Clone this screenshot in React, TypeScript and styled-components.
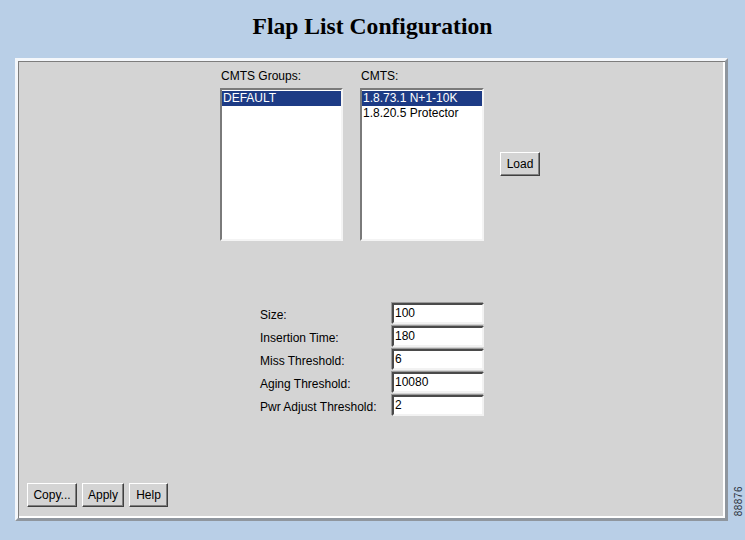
import React from 'react'
import styled, { createGlobalStyle } from 'styled-components'

const GlobalStyle = createGlobalStyle`
  html, body {
    margin: 0;
    padding: 0;
    background: #b9cfe7;
  }
  body {
    width: 745px;
    height: 540px;
    overflow: hidden;
    font-family: 'Liberation Sans', Arial, sans-serif;
  }
`

const Page = styled.div`
  position: relative;
  width: 745px;
  height: 540px;
  background: #b9cfe7;
`

const Title = styled.h1`
  margin: 0;
  height: 58px;
  line-height: 52px;
  text-align: center;
  font-family: 'Liberation Serif', 'Times New Roman', serif;
  font-size: 23.6px;
  font-weight: bold;
  color: #000;
`

const Panel = styled.div`
  box-sizing: border-box;
  margin-left: 15px;
  width: 713px;
  height: 463px;
  background: #d4d4d4;
  border: 3px solid;
  border-color: #f4f7fb #8f969e #8f969e #f4f7fb;
  box-shadow: inset 1px 1px 0 #7d7d7d, inset -2px -2px 0 #ffffff;
  padding: 8px 4px 8px 2px;
  display: flex;
  flex-direction: column;
`

const ListRow = styled.div`
  display: flex;
  align-items: flex-start;
  padding-left: 200px;
`

const ListColumn = styled.div<{ $gap?: number }>`
  display: flex;
  flex-direction: column;
  margin-right: ${({ $gap }) => $gap ?? 0}px;
`

const Caption = styled.div`
  font-size: 12px;
  line-height: 14px;
  height: 14px;
  color: #000;
  padding-left: 1px;
  margin-bottom: 5px;
`

const ListBox = styled.div<{ $width: number }>`
  box-sizing: border-box;
  width: ${({ $width }) => $width}px;
  height: 153px;
  background: #fff;
  border: 2px solid;
  border-color: #7a7a7a #f4f4f4 #f4f4f4 #7a7a7a;
  padding-top: 1px;
`

const ListItem = styled.div<{ $selected?: boolean }>`
  height: 15px;
  line-height: 15px;
  font-size: 12px;
  padding-left: 1px;
  white-space: nowrap;
  color: ${({ $selected }) => ($selected ? '#ffffff' : '#000000')};
  background: ${({ $selected }) => ($selected ? '#1d3b85' : 'transparent')};
`

const Button = styled.button<{ $width: number }>`
  box-sizing: border-box;
  width: ${({ $width }) => $width}px;
  height: 24px;
  padding: 0;
  background: #d4d4d4;
  border: 1px solid;
  border-color: #ffffff #404040 #404040 #ffffff;
  box-shadow: inset -1px -1px 0 #808080;
  font-family: 'Liberation Sans', Arial, sans-serif;
  font-size: 12px;
  color: #000;
  cursor: default;
`

const LoadSlot = styled.div`
  margin-left: 16px;
  margin-top: 83px;
`

const Form = styled.div`
  margin-top: 62px;
  margin-left: 240px;
  display: grid;
  grid-template-columns: 132px 92px;
  grid-auto-rows: 21px;
  row-gap: 2px;
`

const FieldLabel = styled.div`
  box-sizing: border-box;
  font-size: 12px;
  line-height: 21px;
  height: 21px;
  color: #000;
  padding-top: 2px;
`

const Field = styled.div`
  box-sizing: border-box;
  height: 21px;
  background: #fff;
  border: 2px solid;
  border-color: #4a4a4a #f2f2f2 #f2f2f2 #4a4a4a;
  box-shadow: -1px -1px 0 #9a9a9a;
  font-size: 12px;
  line-height: 17px;
  padding-left: 1px;
  color: #000;
`

const Spacer = styled.div`
  flex: 1;
`

const ButtonBar = styled.div`
  display: flex;
  gap: 5px;
  padding-left: 7px;
  margin-bottom: 3px;
`

const FigureNumber = styled.div`
  position: absolute;
  right: 1px;
  top: 486px;
  writing-mode: vertical-rl;
  transform: rotate(180deg);
  font-size: 10px;
  color: #2a2f3a;
  letter-spacing: 0.5px;
`

const fields = [
  { label: 'Size:', value: '100' },
  { label: 'Insertion Time:', value: '180' },
  { label: 'Miss Threshold:', value: '6' },
  { label: 'Aging Threshold:', value: '10080' },
  { label: 'Pwr Adjust Threshold:', value: '2' },
]

export default function App() {
  return (
    <Page>
      <GlobalStyle />
      <Title>Flap List Configuration</Title>
      <Panel>
        <ListRow>
          <ListColumn $gap={17}>
            <Caption>CMTS Groups:</Caption>
            <ListBox $width={123}>
              <ListItem $selected>DEFAULT</ListItem>
            </ListBox>
          </ListColumn>
          <ListColumn>
            <Caption>CMTS:</Caption>
            <ListBox $width={124}>
              <ListItem $selected>1.8.73.1 N+1-10K</ListItem>
              <ListItem>1.8.20.5 Protector</ListItem>
            </ListBox>
          </ListColumn>
          <LoadSlot>
            <Button $width={40}>Load</Button>
          </LoadSlot>
        </ListRow>
        <Form>
          {fields.map((f) => (
            <React.Fragment key={f.label}>
              <FieldLabel>{f.label}</FieldLabel>
              <Field>{f.value}</Field>
            </React.Fragment>
          ))}
        </Form>
        <Spacer />
        <ButtonBar>
          <Button $width={50}>Copy...</Button>
          <Button $width={42}>Apply</Button>
          <Button $width={39}>Help</Button>
        </ButtonBar>
      </Panel>
      <FigureNumber>88876</FigureNumber>
    </Page>
  )
}
